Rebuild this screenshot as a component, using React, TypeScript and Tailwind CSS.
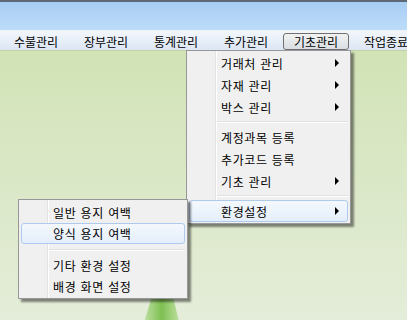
import React from 'react';

type Item = { label: string; sub?: boolean; active?: boolean } | 'sep';

const mainItems: Item[] = [
  { label: '거래처 관리', sub: true },
  { label: '자재 관리', sub: true },
  { label: '박스 관리', sub: true },
  'sep',
  { label: '계정과목 등록' },
  { label: '추가코드 등록' },
  { label: '기초 관리', sub: true },
  'sep',
  { label: '환경설정', sub: true, active: true },
];

const subItems: Item[] = [
  { label: '일반 용지 여백' },
  { label: '양식 용지 여백', active: true },
  'sep',
  { label: '기타 환경 설정' },
  { label: '배경 화면 설정' },
];

const barItems = ['수불관리', '장부관리', '통계관리', '추가관리', '기초관리', '작업종료'];

function MenuList({ items, rowH, sepH }: { items: Item[]; rowH: string; sepH: string }) {
  return (
    <>
      {/* icon column separator */}
      <div className="absolute left-[28px] top-0 bottom-0 w-px bg-[#e2e3e3]" />
      <div className="absolute left-[29px] top-0 bottom-0 w-px bg-white" />
      {items.map((it, i) =>
        it === 'sep' ? (
          <div key={i} className={`relative flex flex-col justify-center pl-[30px] pr-[2px] ${sepH}`}>
            <div className="h-px bg-[#e0e0e0]" />
            <div className="h-px bg-white" />
          </div>
        ) : (
          <div
            key={i}
            className={`relative mx-[2px] flex items-center justify-between pl-[31px] pr-[8px] rounded-[3px] border ${rowH} ${
              it.active
                ? 'border-[#aecbef] bg-gradient-to-b from-[#f4f8fd] to-[#e4eefb]'
                : 'border-transparent'
            }`}
          >
            <span className="leading-none pt-px tracking-[0.6px] [word-spacing:1px]">{it.label}</span>
            {it.sub && (
              <span className="w-0 h-0 border-y-[4px] border-y-transparent border-l-[4px] border-l-black" />
            )}
          </div>
        )
      )}
    </>
  );
}

export default function App() {
  return (
    <div className="relative w-[407px] h-[320px] overflow-hidden text-[12px] text-black font-['Noto_Sans_CJK_KR','Noto_Sans',sans-serif]">
      {/* window title area */}
      <div className="h-[30px] border-t-2 border-[#5c6876] bg-gradient-to-b from-[#a7cdf3] to-[#bddcfa]" />

      {/* menu bar */}
      <div className="flex h-[20px] pl-px pt-[2px] border-t border-[#eef3fa] bg-gradient-to-b from-[#f3f7fc] to-[#dce6f3]">
        {barItems.map((b) => (
          <div key={b} className="w-[70px] shrink-0 flex px-[2px]">
            <div
              className={`flex-1 flex items-center justify-center rounded-[3px] border ${
                b === '기초관리'
                  ? 'border-[#707070] bg-gradient-to-b from-[#f2f2f2] to-[#d9dde3]'
                  : 'border-transparent'
              }`}
            >
              <span className="leading-none pt-px">{b}</span>
            </div>
          </div>
        ))}
      </div>

      {/* desktop background */}
      <div className="relative h-[270px] border-t border-[#c4d2a8] bg-gradient-to-b from-[#d2e3b6] to-[#e4edd9]">
        <svg className="absolute left-[130px] top-[245px]" width="60" height="30" viewBox="0 0 60 30">
          <defs>
            <linearGradient id="g" x1="0" x2="1" y1="0" y2="0">
              <stop offset="0" stopColor="#c3e2a8" />
              <stop offset="0.5" stopColor="#7fc052" />
              <stop offset="1" stopColor="#bfe0a2" />
            </linearGradient>
          </defs>
          <polygon points="22,0 43,0 50,30 13,30" fill="url(#g)" />
        </svg>
      </div>

      {/* dropdown */}
      <div className="absolute left-[186px] top-[50px] w-[165px] py-[1px] border border-[#979797] bg-[#f0f0f0] shadow-[3px_3px_2px_rgba(0,0,0,0.45)]">
        <MenuList items={mainItems} rowH="h-[22px]" sepH="h-[8px]" />
      </div>

      {/* submenu */}
      <div className="absolute left-[18px] top-[199px] w-[170px] pt-[2px] pb-px border border-[#979797] bg-[#f0f0f0] shadow-[3px_3px_2px_rgba(0,0,0,0.45)]">
        <MenuList items={subItems} rowH="h-[21px]" sepH="h-[11px]" />
      </div>
    </div>
  );
}
